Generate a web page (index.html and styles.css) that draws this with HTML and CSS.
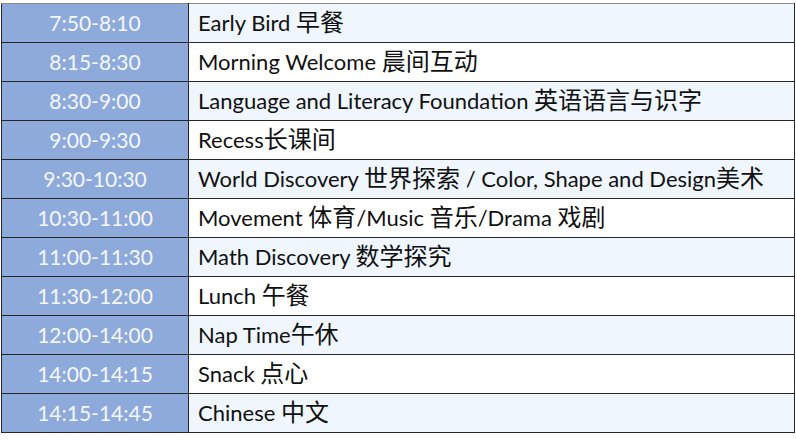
FILE: index.html
```html
<!DOCTYPE html>
<html>
<head>
<meta charset="utf-8">
<link rel="stylesheet" href="styles.css">
</head>
<body>
<table class="schedule">
<tr class="band"><td class="time">7:50-8:10</td><td class="act">Early Bird <span class="zh">早餐</span></td></tr>
<tr><td class="time">8:15-8:30</td><td class="act">Morning Welcome <span class="zh">晨间互动</span></td></tr>
<tr class="band"><td class="time">8:30-9:00</td><td class="act">Language and Literacy Foundation <span class="zh">英语语言与识字</span></td></tr>
<tr><td class="time">9:00-9:30</td><td class="act">Recess<span class="zh">长课间</span></td></tr>
<tr class="band"><td class="time">9:30-10:30</td><td class="act">World Discovery <span class="zh">世界探索</span> / Color, Shape and Design<span class="zh">美术</span></td></tr>
<tr><td class="time">10:30-11:00</td><td class="act">Movement <span class="zh">体育</span>/Music <span class="zh">音乐</span>/Drama <span class="zh">戏剧</span></td></tr>
<tr class="band"><td class="time">11:00-11:30</td><td class="act">Math Discovery <span class="zh">数学探究</span></td></tr>
<tr><td class="time">11:30-12:00</td><td class="act">Lunch <span class="zh">午餐</span></td></tr>
<tr class="band"><td class="time">12:00-14:00</td><td class="act">Nap Time<span class="zh">午休</span></td></tr>
<tr><td class="time">14:00-14:15</td><td class="act">Snack <span class="zh">点心</span></td></tr>
<tr class="band"><td class="time">14:15-14:45</td><td class="act">Chinese <span class="zh">中文</span></td></tr>
</table>
</body>
</html>
```
FILE: styles.css
```css
html, body {
  background: #ffffff;
}
body {
  margin: 3px 0 0 1px;
  font-family: Lato, "Noto Sans CJK SC", sans-serif;
}
.schedule {
  border-collapse: collapse;
  width: 794px;
  table-layout: fixed;
}
.schedule td {
  border: 1px solid #262626;
  height: 38px;
  padding: 0;
  font-size: 22px;
  line-height: 38px;
  white-space: nowrap;
}
.schedule tr:first-child td {
  border-top-color: #8a8a8a;
}
.schedule td.time {
  width: 186px;
  background: #8eaadb;
  color: #f4f7fc;
  text-align: center;
  font-size: 21px;
}
.schedule td.act {
  color: #111111;
  padding-left: 9px;
  background: #ffffff;
}
.schedule .band td.act {
  background: #eff6fd;
}
.zh {
  font-family: "Noto Sans CJK SC", sans-serif;
  font-size: 24px;
  line-height: 1;
}
```
